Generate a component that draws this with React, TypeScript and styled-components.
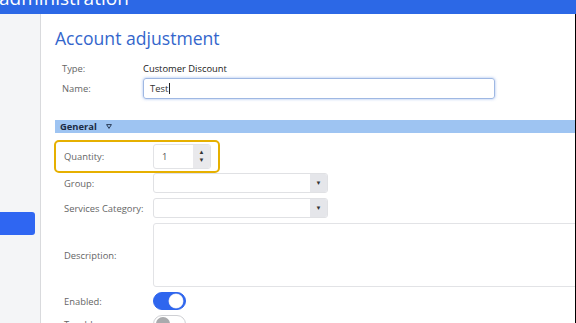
import React from "react";
import styled, { createGlobalStyle, css } from "styled-components";

const Global = createGlobalStyle`
  html, body { margin: 0; padding: 0; height: 100%; overflow: hidden; background: #fff; }
  body { font-family: "Open Sans", "Liberation Sans", sans-serif; }
  #root { height: 100%; }
`;

const Page = styled.div`
  display: flex;
  flex-direction: column;
  height: 100%;
`;

const Header = styled.header`
  height: 14px;
  flex: none;
  background: #2c68e6;
  overflow: hidden;
`;

const HeaderTitle = styled.div`
  color: #fff;
  font-size: 19px;
  line-height: 19px;
  margin: -11px 0 0 -1px;
  white-space: nowrap;
`;

const Body = styled.div`
  flex: 1;
  display: flex;
  min-height: 0;
`;

const Sidebar = styled.aside`
  width: 40px;
  flex: none;
  background: #f4f5f7;
  border-right: 1px solid #d9dadd;
  padding-top: 198px;
  box-sizing: content-box;
`;

const SideButton = styled.div`
  width: 35px;
  height: 23px;
  background: #2f66f2;
  border-radius: 0 3px 3px 0;
`;

const Main = styled.main`
  flex: 1;
  min-width: 0;
  background: #fff;
  border-right: 1px solid #000;
  overflow: hidden;
  padding: 13px 0 0 14px;
  display: flex;
  flex-direction: column;
`;

const Title = styled.h1`
  margin: 0;
  font-weight: 400;
  font-size: 17.6px;
  line-height: 22px;
  color: #3466cc;
`;

const InfoRow = styled.div<{ $top: number }>`
  display: flex;
  align-items: center;
  margin-top: ${(p) => p.$top}px;
  padding-left: 7px;
  font-size: 9.4px;
  line-height: 12px;
`;

const InfoLabel = styled.span`
  width: 81px;
  flex: none;
  color: #666;
`;

const InfoValue = styled.span`
  color: #222;
`;

const TextBox = styled.div`
  box-sizing: border-box;
  width: 352px;
  height: 21px;
  border: 1px solid #9fb8e3;
  border-radius: 3px;
  box-shadow: 0 0 3px rgba(120, 160, 230, 0.7);
  display: flex;
  align-items: center;
  padding-left: 6px;
  color: #333;
  font-size: 9.4px;
`;

const Caret = styled.span`
  display: inline-block;
  width: 1px;
  height: 11px;
  background: #222;
  margin-left: 1px;
`;

const Separator = styled.div`
  height: 1px;
  background: #c9d5e6;
  margin: 13px 0 0 -14px;
`;

const SectionBar = styled.div`
  margin-top: 8px;
  height: 18px;
  background: #9ec4f2;
  display: flex;
  align-items: center;
  padding-left: 5px;
  gap: 9px;
  font-size: 9.4px;
  font-weight: 700;
  color: #1b2b45;
`;

const Section = styled.div`
  display: flex;
  flex-direction: column;
  gap: 5px;
  padding: 11px 0 0 3px;
`;

const Row = styled.div<{ $highlight?: boolean }>`
  display: flex;
  align-items: center;
  padding-left: 6px;
  font-size: 9.4px;
  ${(p) =>
    p.$highlight &&
    css`
      align-self: flex-start;
      padding-right: 5px;
      margin-bottom: -1px;
      outline: 2px solid #e6b000;
      outline-offset: 2px;
      border-radius: 1px;
    `}
`;

const Label = styled.span`
  width: 89px;
  flex: none;
  color: #666;
`;

const NumberBox = styled.div`
  box-sizing: border-box;
  width: 58px;
  height: 25px;
  border: 1px solid #e2e3e6;
  border-radius: 3px;
  display: flex;
  overflow: hidden;
`;

const NumberValue = styled.span`
  flex: 1;
  display: flex;
  align-items: center;
  padding-left: 8px;
  color: #555;
`;

const Spinner = styled.span`
  width: 17px;
  background: #e9e9ec;
  display: flex;
  flex-direction: column;
  align-items: center;
  justify-content: center;
  gap: 3px;
  font-size: 6px;
  line-height: 5px;
  color: #333;
`;

const Select = styled.div`
  box-sizing: border-box;
  width: 175px;
  height: 20px;
  border: 1px solid #e0e1e4;
  border-radius: 3px;
  display: flex;
  justify-content: flex-end;
  overflow: hidden;
`;

const SelectArrow = styled.span`
  width: 17px;
  background: #e5e6ea;
  display: flex;
  align-items: center;
  justify-content: center;
  font-size: 6px;
  color: #333;
`;

const TextArea = styled.div`
  box-sizing: border-box;
  flex: 1;
  height: 64px;
  margin-right: -20px;
  border: 1px solid #e2e3e6;
  border-radius: 3px;
`;

const Toggle = styled.span<{ $on?: boolean }>`
  box-sizing: border-box;
  width: 33px;
  height: 18px;
  border-radius: 9px;
  display: flex;
  align-items: center;
  padding: 0 2px;
  justify-content: ${(p) => (p.$on ? "flex-end" : "flex-start")};
  background: ${(p) => (p.$on ? "#2f66ee" : "#fff")};
  border: 1px solid ${(p) => (p.$on ? "#2f66ee" : "#cfd0d4")};
`;

const Knob = styled.span<{ $on?: boolean }>`
  width: 14px;
  height: 14px;
  border-radius: 50%;
  background: ${(p) => (p.$on ? "#fff" : "#a9aaad")};
  box-shadow: ${(p) => (p.$on ? "0 0 0 0.5px #c9d4ee" : "none")};
`;

export default function App() {
  return (
    <Page>
      <Global />
      <Header>
        <HeaderTitle>administration</HeaderTitle>
      </Header>
      <Body>
        <Sidebar>
          <SideButton />
        </Sidebar>
        <Main>
          <Title>Account adjustment</Title>
          <InfoRow $top={14}>
            <InfoLabel>Type:</InfoLabel>
            <InfoValue>Customer Discount</InfoValue>
          </InfoRow>
          <InfoRow $top={3}>
            <InfoLabel>Name:</InfoLabel>
            <TextBox>
              Test
              <Caret />
            </TextBox>
          </InfoRow>
          <Separator />
          <SectionBar>
            <span>General</span>
            <svg width="6" height="5" viewBox="0 0 6 5">
              <path d="M0.6 0.6 L5.4 0.6 L3 4.4 Z" fill="none" stroke="#1b2b45" strokeWidth="0.9" />
            </svg>
          </SectionBar>
          <Section>
            <Row $highlight>
              <Label>Quantity:</Label>
              <NumberBox>
                <NumberValue>1</NumberValue>
                <Spinner>
                  <span>▲</span>
                  <span>▼</span>
                </Spinner>
              </NumberBox>
            </Row>
            <Row>
              <Label>Group:</Label>
              <Select>
                <SelectArrow>▼</SelectArrow>
              </Select>
            </Row>
            <Row>
              <Label>Services Category:</Label>
              <Select>
                <SelectArrow>▼</SelectArrow>
              </Select>
            </Row>
            <Row>
              <Label>Description:</Label>
              <TextArea />
            </Row>
            <Row>
              <Label>Enabled:</Label>
              <Toggle $on>
                <Knob $on />
              </Toggle>
            </Row>
            <Row>
              <Label>Taxable:</Label>
              <Toggle>
                <Knob />
              </Toggle>
            </Row>
          </Section>
        </Main>
      </Body>
    </Page>
  );
}
